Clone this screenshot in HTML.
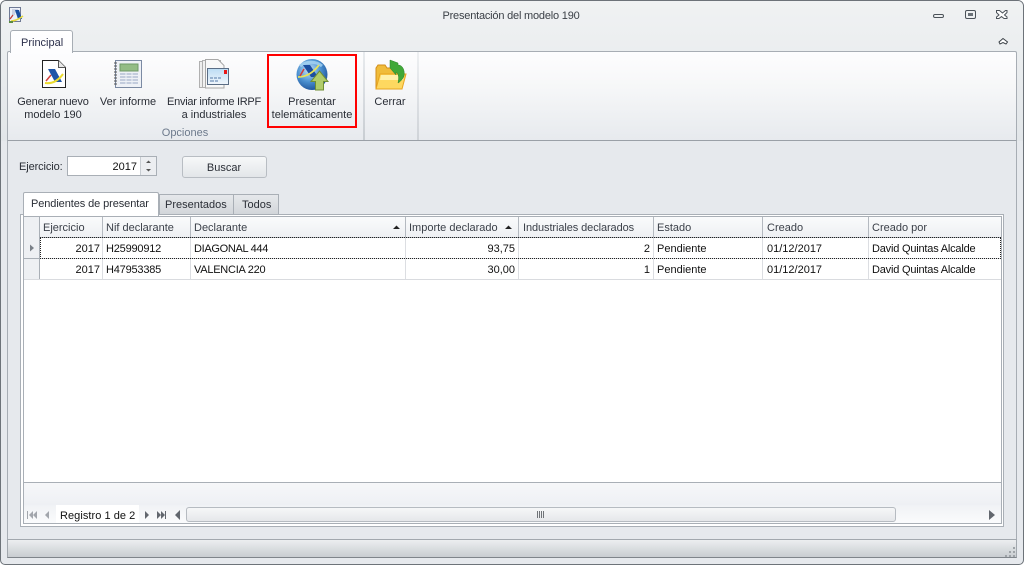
<!DOCTYPE html>
<html><head><meta charset="utf-8"><style>
html,body{margin:0;padding:0;width:1024px;height:565px;overflow:hidden;background:#fff}
*{box-sizing:border-box}
body{font-family:"Liberation Sans",sans-serif;font-size:11px;color:#2a2e36;position:relative}
.a{position:absolute}
.t{position:absolute;white-space:nowrap;line-height:13px;margin-top:1px}
.c{text-align:center;transform:translateX(-50%)}
.r{text-align:right;transform:translateX(-100%)}
svg{position:absolute;overflow:visible}
</style></head><body>
<!-- window -->
<div class="a" style="left:0;top:0;width:1024px;height:565px;background:#e6e9ed;border:1px solid #6d7379;border-radius:6px 6px 5px 5px"></div>
<div class="a" style="left:1px;top:1px;width:1022px;height:140px;background:linear-gradient(#f0f2f3,#e2e6e9);border-radius:5px 5px 0 0"></div>
<svg style="left:8px;top:6px" width="18" height="18" viewBox="0 0 18 18"><rect x="1.5" y="1.5" width="11" height="14" fill="#eef1f8" stroke="#6f7a95"/><path d="M4 4h6M4 6h6M4 8h3" stroke="#a9b4cf"/><path d="M7 4l4 0 3 9-4 0z" fill="#1c4fa0"/><path d="M3 15c4 0 8-2 12-5" stroke="#e8d93a" stroke-width="1.5" fill="none"/><path d="M2 13l3-4" stroke="#c8403a" stroke-width="1.3"/><path d="M1 15h4v2H1z" fill="#5c8c40"/></svg>
<div class="t c" style="left:511px;top:9px;letter-spacing:-.2px;color:#3a3f46">Presentación del modelo 190</div>
<svg style="left:0;top:0" width="1024" height="50"><rect x="933.5" y="14.5" width="10" height="3" rx="1.5" fill="none" stroke="#4b5259"/><rect x="965.5" y="10.5" width="10" height="8" rx="1.500" fill="none" stroke="#4b5259"/><rect x="968" y="13" width="5" height="3" fill="#6a7178"/><path d="M996.500 10.500l3 0 3 2.500 3-2.500 1.500 0 0 2-2.500 2.500 2.500 2 0 1.500-3 0-2.500-2-2.500 2-2.500 0 0-1.500 2.500-2-2.500-2.500z" fill="#fff" stroke="#4b5259"/><path d="M999 42l4-3.500 4.500 3.500-1.500 2-3-1.500-3 1.500z" fill="#fff" stroke="#3c4248"/></svg>
<!-- ribbon -->
<div class="a" style="left:7px;top:51px;width:1010px;height:90px;background:linear-gradient(#fdfdfe,#f6f7f8 40%,#e7eaee);border:1px solid #a7adb4;border-bottom:1px solid #9aa0a7;border-radius:2px 2px 0 0"></div>
<div class="a" style="left:10px;top:30px;width:63px;height:23px;background:linear-gradient(#fff,#fdfdfe);border:1px solid #a7adb4;border-bottom:0;border-radius:3px 3px 0 0"></div>
<div class="t" style="left:21px;top:36px;color:#2b2f4a">Principal</div>
<div class="a" style="left:363px;top:52px;width:2px;height:88px;background:linear-gradient(#e8ebee,#c8cdd2);"></div>
<div class="a" style="left:417px;top:52px;width:2px;height:88px;background:linear-gradient(#eef0f2,#cfd3d8)"></div>
<!-- ribbon icons -->
<svg style="left:42px;top:60px" width="24" height="28" viewBox="0 0 24 28"><path d="M.5.5H16.500l7 7V27.500H.5z" fill="#fff" stroke="#222"/><path d="M16.500.5v7h7" fill="#e8e8e8" stroke="#555"/><path d="M6 9h7l7 13h-7z" fill="#1e55a8"/><path d="M3 23c7 1 13-2 18-9" stroke="#ecdc2e" stroke-width="2" fill="none"/><path d="M4 21l5-6" stroke="#d2403c" stroke-width="1.500"/></svg>
<svg style="left:113px;top:59px" width="30" height="30" viewBox="0 0 30 30"><rect x="2.500" y="1.500" width="26" height="27" fill="#eef1f6" stroke="#7b8aa3"/><path d="M1 4h3M1 7h3M1 10h3M1 13h3M1 16h3M1 19h3M1 22h3M1 25h3" stroke="#555" stroke-width="1"/><rect x="7" y="5" width="18" height="7" fill="#93bc85" stroke="#6f9a68"/><path d="M7 15h18M7 18h18M7 21h18M7 24h18" stroke="#98a8c4"/><path d="M13 14v11M19 14v11" stroke="#eef1f6"/></svg>
<svg style="left:198px;top:58px" width="32" height="32" viewBox="0 0 32 32"><rect x="1.500" y="3.500" width="18" height="26" fill="#eee" stroke="#b0b0b0"/><rect x="4.500" y="2.500" width="18" height="27" fill="#f1f1f1" stroke="#b0b0b0"/><path d="M7.500 1.500H20l6 6V30H7.500z" fill="#f8f8f8" stroke="#a8a8a8"/><defs><linearGradient id="g" x1="0" y1="0" x2="0" y2="1"><stop offset="0" stop-color="#bcdcf4"/><stop offset="1" stop-color="#f0f6fc"/></linearGradient></defs><rect x="9.500" y="10.500" width="21" height="16" fill="url(#g)" stroke="#5a6d85"/><rect x="26" y="12" width="3" height="4" fill="#e81818"/><path d="M12 20h3M16 20h3M20 20h3M12 23h4M17 23h3" stroke="#5579a8"/></svg>
<svg style="left:295px;top:58px" width="34" height="34" viewBox="0 0 34 34"><defs><radialGradient id="b" cx=".4" cy=".35" r=".7"><stop offset="0" stop-color="#c8e4f8"/><stop offset=".55" stop-color="#4a90d0"/><stop offset="1" stop-color="#1c4f96"/></radialGradient></defs><circle cx="17" cy="16.500" r="15.500" fill="url(#b)"/><path d="M5 8c6-5 16-5 22 0" stroke="#a8d4f2" stroke-width="3" fill="none" opacity=".8"/><path d="M8 7h7l8 12h-7z" fill="#1c4ea0"/><path d="M3 19c8 0 15-4 21-12" stroke="#e8e35a" stroke-width="1.800" fill="none"/><path d="M5 18l4-7" stroke="#d33a3a" stroke-width="1.500"/><path d="M24.500 13l8.500 10.500h-4.500v8.500h-8v-8.500h-4.500z" fill="#b0cc6a" stroke="#6f8e35"/></svg>
<svg style="left:375px;top:59px" width="32" height="32" viewBox="0 0 32 32"><path d="M1 9V30h26V9H12L10 6H3z" fill="#f0bc3a" stroke="#d28e1a"/><path d="M1 30l4-15h26l-4 15z" fill="#fed860" stroke="#e8a420"/><path d="M6 16h23l-1 5H5z" fill="#fff0a8"/><path d="M15 1l8 3 0 2c5 0 7 6 6 11-1 3-4 6-6 7 1-5 1-9-2-11l0 3-6-7z" fill="#40a838" stroke="#2a8028" stroke-width=".5"/></svg>
<!-- red highlight -->
<div class="a" style="left:267px;top:54px;width:90px;height:74px;border:2px solid #f00"></div>
<div class="t c" style="left:53px;top:95px;letter-spacing:-.15px">Generar nuevo</div>
<div class="t c" style="left:53px;top:108px">modelo 190</div>
<div class="t c" style="left:128px;top:95px">Ver informe</div>
<div class="t c" style="left:214px;top:95px;letter-spacing:-.27px">Enviar informe IRPF</div>
<div class="t c" style="left:214px;top:108px">a industriales</div>
<div class="t c" style="left:312px;top:95px">Presentar</div>
<div class="t c" style="left:312px;top:108px">telemáticamente</div>
<div class="t c" style="left:390px;top:95px">Cerrar</div>
<div class="t c" style="left:185px;top:126px;color:#6d7a8c">Opciones</div>
<!-- left inner borders -->
<div class="a" style="left:7px;top:141px;width:1px;height:416px;background:#a7adb4"></div>
<div class="a" style="left:1016px;top:141px;width:1px;height:416px;background:#a7adb4"></div>
<!-- form -->
<div class="t" style="left:19px;top:160px;letter-spacing:-.1px">Ejercicio:</div>
<div class="a" style="left:67px;top:156px;width:90px;height:20px;background:#fff;border:1px solid #a9afb6"></div>
<div class="t r" style="left:137px;top:160px;color:#111">2017</div>
<div class="a" style="left:140px;top:157px;width:16px;height:18px;background:#eceef1;border-left:1px solid #c8cdd2"></div>
<svg style="left:145px;top:160px" width="7" height="12"><path d="M1 3h5L3.500 0.500zM1 9h5L3.500 11.500z" fill="#555"/></svg>
<div class="a" style="left:182px;top:156px;width:85px;height:22px;background:linear-gradient(#f7f8f9,#e3e6e9);border:1px solid #b8bdc3;border-radius:3px"></div>
<div class="t c" style="left:224px;top:161px">Buscar</div>
<!-- tabs -->
<div class="a" style="left:159px;top:194px;width:75px;height:20px;background:linear-gradient(#e6e8eb,#d2d6da);border:1px solid #a9afb6;border-bottom:0"></div>
<div class="a" style="left:234px;top:194px;width:45px;height:20px;background:linear-gradient(#e6e8eb,#d2d6da);border:1px solid #a9afb6;border-left:0;border-bottom:0"></div>
<div class="t" style="left:165px;top:199px;margin-top:0">Presentados</div>
<div class="t" style="left:242px;top:199px;margin-top:0">Todos</div>
<!-- grid panel -->
<div class="a" style="left:20px;top:214px;width:984px;height:313px;background:#fff;border:1px solid #a9afb6"></div>
<div class="a" style="left:23px;top:192px;width:136px;height:24px;background:#fff;border:1px solid #a9afb6;border-bottom:0;border-radius:2px 2px 0 0"></div>
<div class="t" style="left:31px;top:197px;letter-spacing:-.09px">Pendientes de presentar</div>
<div class="a" style="left:23px;top:216px;width:979px;height:308px;background:#fff;border:1px solid #a9afb6"></div>
<!-- header -->
<div class="a" style="left:24px;top:217px;width:977px;height:21px;background:linear-gradient(#fafbfc,#eef0f3);border-bottom:1px solid #a9afb6"></div>
<div class="a" style="left:24px;top:217px;width:16px;height:62px;background:#eef0f3;border-right:1px solid #a9afb6"></div>
<div class="a" style="left:24px;top:258px;width:16px;height:1px;background:#a9afb6"></div>
<div class="a" style="left:24px;top:279px;width:977px;height:1px;background:#d9dbdf"></div>
<div class="a" style="left:40px;top:258px;width:961px;height:1px;background:#d9dbdf"></div>
<!-- col separators -->
<div class="a" style="left:102px;top:217px;width:1px;height:62px;background:linear-gradient(#b4b9c0 0,#b4b9c0 21px,#dcdee2 21px)"></div>
<div class="a" style="left:190px;top:217px;width:1px;height:62px;background:linear-gradient(#b4b9c0 0,#b4b9c0 21px,#dcdee2 21px)"></div>
<div class="a" style="left:405px;top:217px;width:1px;height:62px;background:linear-gradient(#b4b9c0 0,#b4b9c0 21px,#dcdee2 21px)"></div>
<div class="a" style="left:518px;top:217px;width:1px;height:62px;background:linear-gradient(#b4b9c0 0,#b4b9c0 21px,#dcdee2 21px)"></div>
<div class="a" style="left:653px;top:217px;width:1px;height:62px;background:linear-gradient(#b4b9c0 0,#b4b9c0 21px,#dcdee2 21px)"></div>
<div class="a" style="left:762px;top:217px;width:1px;height:62px;background:linear-gradient(#b4b9c0 0,#b4b9c0 21px,#dcdee2 21px)"></div>
<div class="a" style="left:868px;top:217px;width:1px;height:62px;background:linear-gradient(#b4b9c0 0,#b4b9c0 21px,#dcdee2 21px)"></div>
<!-- header text -->
<div class="t" style="left:43px;top:221px;color:#3a3f48">Ejercicio</div>
<div class="t" style="left:106px;top:221px;color:#3a3f48">Nif declarante</div>
<div class="t" style="left:194px;top:221px;color:#3a3f48">Declarante</div>
<div class="t" style="left:409px;top:221px;color:#3a3f48">Importe declarado</div>
<div class="t" style="left:523px;top:221px;color:#3a3f48;letter-spacing:-.09px">Industriales declarados</div>
<div class="t" style="left:657px;top:221px;color:#3a3f48">Estado</div>
<div class="t" style="left:767px;top:221px;color:#3a3f48">Creado</div>
<div class="t" style="left:872px;top:221px;color:#3a3f48">Creado por</div>
<svg style="left:0;top:0" width="1024" height="280"><path d="M393 229h7l-3.500-3.500zM505 229h7l-3.500-3.500z" fill="#222"/><path d="M30 244.500l4 3.500-4 3.500z" fill="#7a8088"/></svg>
<!-- focus row -->
<div class="a" style="left:40px;top:237px;width:961px;height:1px;border-top:1px dotted #222"></div>
<div class="a" style="left:40px;top:258px;width:961px;height:1px;border-top:1px dotted #222"></div>
<div class="a" style="left:40px;top:237px;width:1px;height:22px;border-left:1px dotted #222"></div>
<div class="a" style="left:1000px;top:237px;width:1px;height:22px;border-left:1px dotted #222"></div>
<!-- rows -->
<div class="t r" style="left:100px;top:242px;color:#111">2017</div>
<div class="t" style="left:106px;top:242px;color:#111;letter-spacing:-.2px">H25990912</div>
<div class="t" style="left:194px;top:242px;color:#111;letter-spacing:-.32px">DIAGONAL 444</div>
<div class="t r" style="left:515px;top:242px;color:#111">93,75</div>
<div class="t r" style="left:650px;top:242px;color:#111">2</div>
<div class="t" style="left:657px;top:242px;color:#111">Pendiente</div>
<div class="t" style="left:767px;top:242px;color:#111">01/12/2017</div>
<div class="t" style="left:872px;top:242px;color:#111;letter-spacing:-.2px">David Quintas Alcalde</div>
<div class="t r" style="left:100px;top:263px;color:#111">2017</div>
<div class="t" style="left:106px;top:263px;color:#111;letter-spacing:-.2px">H47953385</div>
<div class="t" style="left:194px;top:263px;color:#111;letter-spacing:-.25px">VALENCIA 220</div>
<div class="t r" style="left:515px;top:263px;color:#111">30,00</div>
<div class="t r" style="left:650px;top:263px;color:#111">1</div>
<div class="t" style="left:657px;top:263px;color:#111">Pendiente</div>
<div class="t" style="left:767px;top:263px;color:#111">01/12/2017</div>
<div class="t" style="left:872px;top:263px;color:#111;letter-spacing:-.2px">David Quintas Alcalde</div>
<!-- footer -->
<div class="a" style="left:24px;top:482px;width:977px;height:1px;background:#a9afb6"></div>
<div class="a" style="left:24px;top:483px;width:977px;height:22px;background:linear-gradient(#f6f7f9,#eef0f4)"></div>
<div class="a" style="left:24px;top:505px;width:977px;height:18px;background:linear-gradient(#f0f2f5,#fafbfc)"></div>
<div class="a" style="left:56px;top:505px;width:83px;height:18px;background:#fff"></div>
<div class="t" style="left:60px;top:509px;color:#111;font-size:11px;letter-spacing:.05px">Registro 1 de 2</div>
<svg style="left:0;top:0" width="1024" height="565"><g fill="#a2a6ac"><path d="M27 511h1v8h-1zM33 511v8l-4-4zM37 511v8l-4-4zM49 511v8l-4-4z"/></g><g fill="#62676e"><path d="M145 511v8l4-4zM157 511v8l4-4zM161 511v8l4-4zM165 511h1v8h-1z"/><path d="M180 510v10l-5-5zM989 510v10l6-5z"/></g></svg>
<div class="a" style="left:186px;top:507px;width:710px;height:15px;background:linear-gradient(#f6f7f8,#e5e7ea);border:1px solid #b6bbc1;border-radius:3px"></div>
<svg style="left:0;top:0" width="1024" height="565"><path d="M537 511h1v7h-1zM539 511h1v7h-1zM541 511h1v7h-1zM543 511h1v7h-1z" fill="#707478"/></svg>
<!-- status bar -->
<div class="a" style="left:7px;top:539px;width:1010px;height:19px;background:linear-gradient(#eceef0,#c9cdd1);border:1px solid #a2a8ae;border-bottom:1px solid #7f858b"></div>
<svg style="left:0;top:0" width="1024" height="565"><path d="M1013 547h2v2h-2zM1009 551h2v2h-2zM1013 551h2v2h-2zM1005 555h2v2h-2zM1009 555h2v2h-2zM1013 555h2v2h-2z" fill="#9ea3a8"/></svg>
</body></html>
